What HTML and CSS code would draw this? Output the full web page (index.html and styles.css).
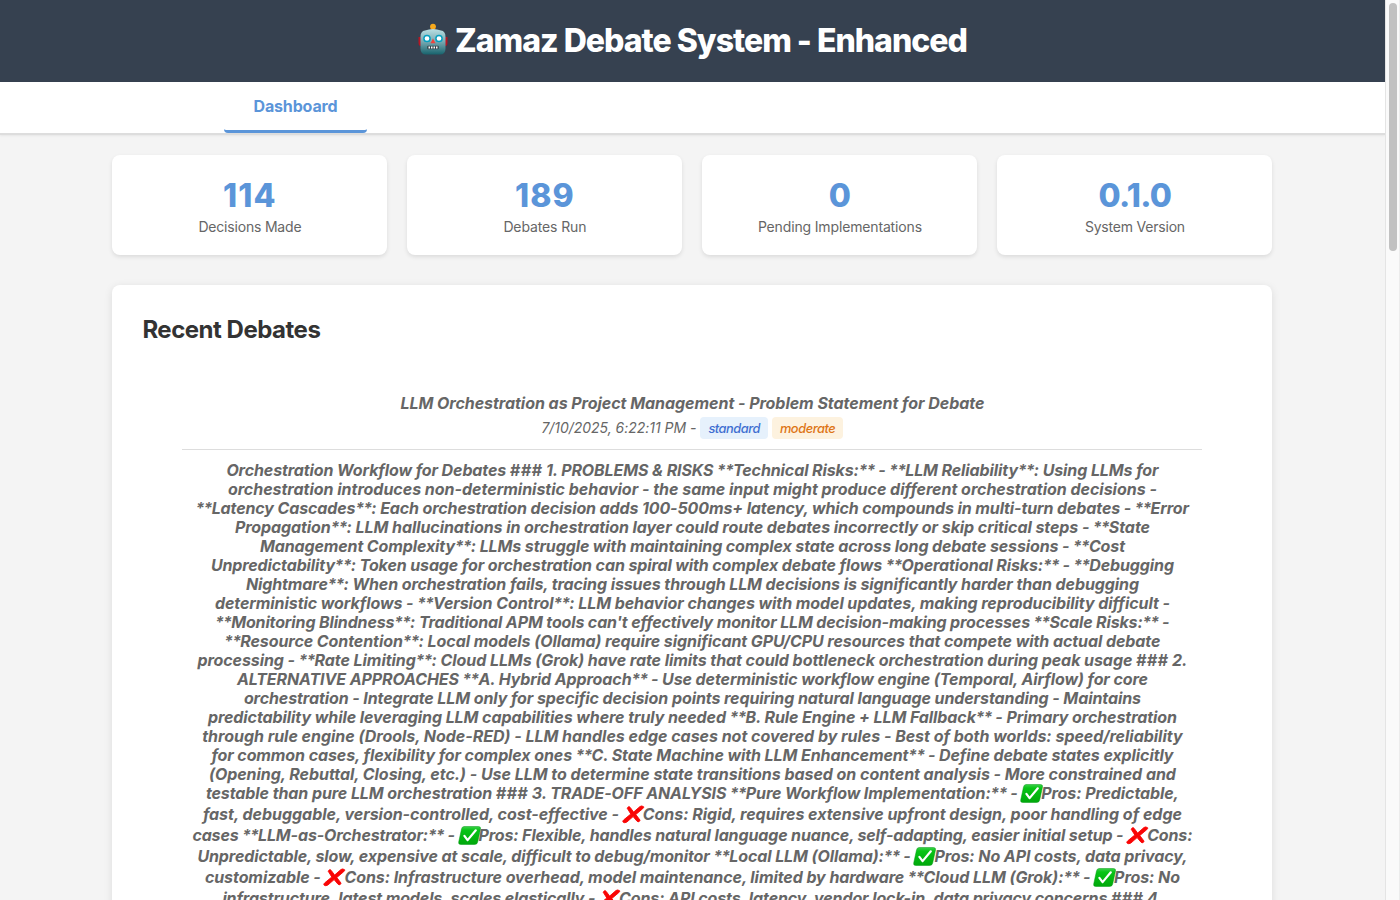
FILE: index.html
```html
<!DOCTYPE html>
<html lang="en">
<head>
<meta charset="utf-8">
<title>Zamaz Debate System - Enhanced</title>
<link rel="stylesheet" href="styles.css">
</head>
<body>
<svg class="defs" aria-hidden="true">
  <defs>
    <linearGradient id="green" x1="0" y1="0" x2="0" y2="1"><stop offset="0" stop-color="#3bd04a"/><stop offset=".2" stop-color="#08c416"/><stop offset="1" stop-color="#00a80b"/></linearGradient>
    <linearGradient id="metal" x1="0" y1="0" x2="0" y2="1"><stop offset="0" stop-color="#b9dfe3"/><stop offset=".5" stop-color="#77a9b1"/><stop offset="1" stop-color="#17636d"/></linearGradient>
    <symbol id="check" viewBox="0 0 23 19"><path d="M6 .5H20.5Q23 .5 22.5 3L19.7 16Q19.2 18.5 16.6 18.5H2.8Q.2 18.5 .7 16L3.500 3Q4 .5 6 .5Z" fill="url(#green)" stroke="#079c16" stroke-width=".5"/><path d="M6.400 9.800 9.600 14.100 17.800 4.300" fill="none" stroke="#fff" stroke-width="2.200" stroke-linecap="round" stroke-linejoin="round"/></symbol>
    <symbol id="cross" viewBox="0 0 23 19"><path d="M5.200 3.200Q6.700 .3 8.200 2.400L11.600 7.100 18 1.500Q19.700 .2 21.700 1.800 22 2.600 20.700 3.700L13.800 9.500 18.100 15.200Q17 18 15 16.200L11.100 11.600 4.800 17.100Q2.700 18.500 .9 16.900.4 16 1.800 14.800L8.800 9Z" fill="#f90505" stroke="#f90505" stroke-width=".9" stroke-linejoin="round"/></symbol>
  </defs>
</svg>
<div class="page">
  <header class="header">
    <svg class="robot" viewBox="0 0 30 32"><path d="M.5 14h4v9H2Q.5 22.500 .5 20ZM29.500 14h-4v9H28Q29.500 22.500 29.500 20Z" fill="#b51623"/><path d="M12.500 3h5v5h-5Z" fill="#9b4c22"/><circle cx="15" cy="3.600" r="2.900" fill="#f6a91c"/><path d="M7 7.500Q15 4.500 23 7.500 27.500 8 27.500 14v11.500q0 6-5.500 6H8q-5.500 0-5.500-6V14q0-6 4.500-6.500Z" fill="url(#metal)"/><circle cx="9" cy="15.500" r="3.100" fill="#fff" stroke="#079fc0" stroke-width="1.500"/><circle cx="21" cy="15.500" r="3.100" fill="#fff" stroke="#079fc0" stroke-width="1.500"/><path d="m15 15.500 2.500 4.800h-5Z" fill="#f0433c"/><rect x="9.200" y="22.800" width="11.600" height="3.400" rx="1" fill="#34454c"/><path d="M10.500 24.500h9" stroke="#fff" stroke-width="2.200" stroke-dasharray="1.500 1"/></svg>
    <h1 class="title"><span class="fit" data-w="512">Zamaz Debate System - Enhanced</span></h1>
  </header>
  <nav class="nav"><div class="tabs"><a class="tab"><span class="fit" data-w="84">Dashboard</span></a></div></nav>
  <main class="main">
    <section class="stats">
      <div class="stat"><div class="value"><span class="fit" data-w="54">114</span></div><div class="label"><span class="fit" data-w="103">Decisions Made</span></div></div>
      <div class="stat"><div class="value"><span class="fit" data-w="60">189</span></div><div class="label"><span class="fit" data-w="83">Debates Run</span></div></div>
      <div class="stat"><div class="value">0</div><div class="label"><span class="fit" data-w="164">Pending Implementations</span></div></div>
      <div class="stat"><div class="value"><span class="fit" data-w="73">0.1.0</span></div><div class="label"><span class="fit" data-w="100">System Version</span></div></div>
    </section>
    <section class="panel">
      <h2 class="heading"><span class="fit" data-w="178">Recent Debates</span></h2>
      <article class="debate">
        <div class="question"><span class="fit" data-w="584">LLM Orchestration as Project Management - Problem Statement for Debate</span></div>
        <div class="meta"><span class="fit" data-w="155">7/10/2025, 6:22:11 PM -</span><span class="badge standard"><span class="fit" data-w="51.5">standard</span></span><span class="badge moderate"><span class="fit" data-w="55.5">moderate</span></span></div>
        <div class="body">
          <div class="line"><span class="fit" data-w="932">Orchestration Workflow for Debates ### 1. PROBLEMS &amp; RISKS **Technical Risks:** - **LLM Reliability**: Using LLMs for</span></div>
          <div class="line"><span class="fit" data-w="929">orchestration introduces non-deterministic behavior - the same input might produce different orchestration decisions -</span></div>
          <div class="line"><span class="fit" data-w="993">**Latency Cascades**: Each orchestration decision adds 100-500ms+ latency, which compounds in multi-turn debates - **Error</span></div>
          <div class="line"><span class="fit" data-w="915">Propagation**: LLM hallucinations in orchestration layer could route debates incorrectly or skip critical steps - **State</span></div>
          <div class="line"><span class="fit" data-w="865">Management Complexity**: LLMs struggle with maintaining complex state across long debate sessions - **Cost</span></div>
          <div class="line"><span class="fit" data-w="963">Unpredictability**: Token usage for orchestration can spiral with complex debate flows **Operational Risks:** - **Debugging</span></div>
          <div class="line"><span class="fit" data-w="893">Nightmare**: When orchestration fails, tracing issues through LLM decisions is significantly harder than debugging</span></div>
          <div class="line"><span class="fit" data-w="955">deterministic workflows - **Version Control**: LLM behavior changes with model updates, making reproducibility difficult -</span></div>
          <div class="line"><span class="fit" data-w="954">**Monitoring Blindness**: Traditional APM tools can't effectively monitor LLM decision-making processes **Scale Risks:** -</span></div>
          <div class="line"><span class="fit" data-w="936">**Resource Contention**: Local models (Ollama) require significant GPU/CPU resources that compete with actual debate</span></div>
          <div class="line"><span class="fit" data-w="990">processing - **Rate Limiting**: Cloud LLMs (Grok) have rate limits that could bottleneck orchestration during peak usage ### 2.</span></div>
          <div class="line"><span class="fit" data-w="911">ALTERNATIVE APPROACHES **A. Hybrid Approach** - Use deterministic workflow engine (Temporal, Airflow) for core</span></div>
          <div class="line"><span class="fit" data-w="897">orchestration - Integrate LLM only for specific decision points requiring natural language understanding - Maintains</span></div>
          <div class="line"><span class="fit" data-w="969">predictability while leveraging LLM capabilities where truly needed **B. Rule Engine + LLM Fallback** - Primary orchestration</span></div>
          <div class="line"><span class="fit" data-w="980">through rule engine (Drools, Node-RED) - LLM handles edge cases not covered by rules - Best of both worlds: speed/reliability</span></div>
          <div class="line"><span class="fit" data-w="962">for common cases, flexibility for complex ones **C. State Machine with LLM Enhancement** - Define debate states explicitly</span></div>
          <div class="line"><span class="fit" data-w="967">(Opening, Rebuttal, Closing, etc.) - Use LLM to determine state transitions based on content analysis - More constrained and</span></div>
          <div class="line tall"><span class="fit" data-w="973">testable than pure LLM orchestration ### 3. TRADE-OFF ANALYSIS **Pure Workflow Implementation:** - <svg class="mark"><use href="#check"/></svg>Pros: Predictable,</span></div>
          <div class="line tall"><span class="fit" data-w="979">fast, debuggable, version-controlled, cost-effective - <svg class="mark"><use href="#cross"/></svg>Cons: Rigid, requires extensive upfront design, poor handling of edge</span></div>
          <div class="line tall"><span class="fit" data-w="1000">cases **LLM-as-Orchestrator:** - <svg class="mark"><use href="#check"/></svg>Pros: Flexible, handles natural language nuance, self-adapting, easier initial setup - <svg class="mark"><use href="#cross"/></svg>Cons:</span></div>
          <div class="line tall"><span class="fit" data-w="990">Unpredictable, slow, expensive at scale, difficult to debug/monitor **Local LLM (Ollama):** - <svg class="mark"><use href="#check"/></svg>Pros: No API costs, data privacy,</span></div>
          <div class="line tall"><span class="fit" data-w="975">customizable - <svg class="mark"><use href="#cross"/></svg>Cons: Infrastructure overhead, model maintenance, limited by hardware **Cloud LLM (Grok):** - <svg class="mark"><use href="#check"/></svg>Pros: No</span></div>
          <div class="line tall"><span class="fit" data-w="940">infrastructure, latest models, scales elastically - <svg class="mark"><use href="#cross"/></svg>Cons: API costs, latency, vendor lock-in, data privacy concerns ### 4.</span></div>
        </div>
      </article>
    </section>
  </main>
</div>
<aside class="scrollbar"><div class="thumb"></div></aside>
<script src="fit.js"></script>
</body>
</html>
```
FILE: styles.css
```css
* { box-sizing: border-box; }
body {
  margin: 0;
  height: 900px;
  overflow: hidden;
  display: flex;
  background: #f4f4f4;
  color: #333;
  font-family: Inter, "Liberation Sans", sans-serif;
}
.defs { position: absolute; width: 0; height: 0; }
.page { width: 1385px; height: 900px; overflow: hidden; }
.fit { display: inline-block; white-space: nowrap; }
.header {
  height: 82px;
  display: flex;
  align-items: center;
  justify-content: center;
  background: #364150;
  color: #fff;
}
.robot { width: 30px; height: 32px; margin-right: 7px; margin-bottom: 4px; }
.title { margin: 0; font-size: 32px; line-height: 38px; font-weight: 800; }
.nav { height: 53px; background: #fff; border-bottom: 2px solid #ddd; box-shadow: 0 1px 2px rgba(0,0,0,.06); }
.tabs { display: flex; padding-left: 224px; }
.tab {
  width: 143px;
  height: 51px;
  padding-top: 14px;
  text-align: center;
  border-bottom: 3px solid #5b95d9;
  border-radius: 4px;
  color: #5b95d9;
  font-size: 16px;
  line-height: 20px;
  font-weight: 700;
}
.main { width: 1160px; margin: 0 0 0 112.4px; padding-top: 20px; }
.stats { display: grid; grid-template-columns: repeat(4, 1fr); gap: 20px; }
.stat {
  height: 100px;
  padding-top: 21px;
  text-align: center;
  background: #fff;
  border-radius: 8px;
  box-shadow: 0 2px 4px rgba(0,0,0,.1);
}
.value { color: #5b95d9; font-size: 32px; line-height: 40px; font-weight: 800; }
.label { padding-top: 2px; color: #666; font-size: 14px; line-height: 18px; }
.panel {
  height: 900px;
  margin-top: 30px;
  padding: 30px;
  background: #fff;
  border-radius: 8px;
  box-shadow: 0 2px 8px rgba(0,0,0,.1);
}
.heading { margin: 0; font-size: 24px; line-height: 30px; font-weight: 700; }
.debate { margin: 48px 40px 0; text-align: center; color: #666; font-style: italic; }
.question { height: 20px; font-size: 16px; line-height: 20px; font-weight: 700; }
.meta {
  height: 37px;
  padding-top: 4px;
  display: flex;
  justify-content: center;
  border-bottom: 1px solid #ddd;
  font-size: 14px;
  line-height: 22px;
}
.badge { height: 22px; margin-left: 4px; padding: 0 8px; border-radius: 4px; font-size: 12.8px; font-weight: 500; line-height: 23px; }
.standard { background: #e6f1fc; color: #3f6fd1; }
.moderate { background: #fdf2df; color: #dd7515; }
.body { padding-top: 11px; font-size: 16px; font-weight: 700; }
.line { height: 19px; line-height: 19px; }
.tall { height: 21px; }
.stars { letter-spacing: -0.9px; margin-left: -0.3px; }
.hashes { letter-spacing: 0.4px; }
.mark { width: 23px; height: 19px; margin: 0 -2px 0 -1px; vertical-align: -4px; overflow: visible; }
.scrollbar { width: 15px; height: 900px; padding: 3px 0 0 3px; background: #fafafa; border-left: 1px solid #e4e4e4; border-right: 1px solid #ececec; }
.thumb { width: 8px; height: 248px; border-radius: 4px; background: #c1c1c1; }
```
FILE: fit.js
```js
// Tightens the markdown markers, then tracks each run of text to its measure.
document.querySelectorAll('.fit').forEach(function (el) {
  el.innerHTML = el.innerHTML
    .replace(/\*\*/g, '<span class="stars">**</span>')
    .replace(/###/g, '<span class="hashes">###</span>');
  var fixed = 0;
  el.querySelectorAll('.stars, .hashes').forEach(function (m) { fixed += m.textContent.length; });
  var spare = parseFloat(el.dataset.w) - el.getBoundingClientRect().width;
  el.style.letterSpacing = (spare / (el.textContent.length - fixed)) + 'px';
});
```
